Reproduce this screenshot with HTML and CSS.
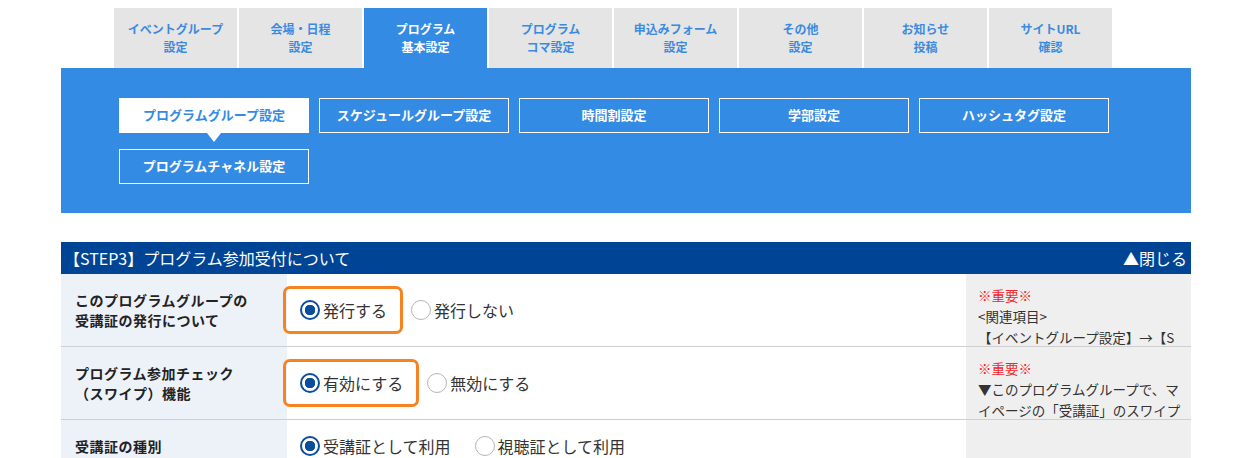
FILE: index.html
```html
<!DOCTYPE html>
<html>
<head>
    <link rel="stylesheet" href="styles.css">
</head>
<body>

<div class="page">
    <!-- Main tabs -->
    <ul class="tabs">
        <li><a href="#">イベントグループ<br>設定</a></li>
        <li><a href="#">会場・日程<br>設定</a></li>
        <li class="active"><a href="#">プログラム<br>基本設定</a></li>
        <li><a href="#">プログラム<br>コマ設定</a></li>
        <li><a href="#">申込みフォーム<br>設定</a></li>
        <li><a href="#">その他<br>設定</a></li>
        <li><a href="#">お知らせ<br>投稿</a></li>
        <li><a href="#">サイトURL<br>確認</a></li>
    </ul>

    <!-- Sub navigation -->
    <div class="subnav">
        <div class="subnav-grid">
            <a href="#" class="current">プログラムグループ設定</a>
            <a href="#">スケジュールグループ設定</a>
            <a href="#">時間割設定</a>
            <a href="#">学部設定</a>
            <a href="#">ハッシュタグ設定</a>
            <a href="#">プログラムチャネル設定</a>
        </div>
    </div>

    <!-- STEP3 section -->
    <div class="section">
        <div class="section-head">
            <span>【STEP3】プログラム参加受付について</span>
            <a href="#" class="toggle">▲閉じる</a>
        </div>

        <div class="row">
            <div class="label">このプログラムグループの<br>受講証の発行について</div>
            <div class="field">
                <label class="radio highlight"><span class="dot checked"></span>発行する</label>
                <label class="radio"><span class="dot"></span>発行しない</label>
            </div>
            <div class="note">
                <p class="important">※重要※</p>
                <p>&lt;関連項目&gt;</p>
                <p>【イベントグループ設定】→【STEP2】マイページ設定</p>
            </div>
        </div>

        <div class="row">
            <div class="label">プログラム参加チェック<br>（スワイプ）機能</div>
            <div class="field">
                <label class="radio highlight"><span class="dot checked"></span>有効にする</label>
                <label class="radio"><span class="dot"></span>無効にする</label>
            </div>
            <div class="note">
                <p class="important">※重要※</p>
                <p>▼このプログラムグループで、マイページの「受講証」のスワイプ機能を利用するかどうかを設定します。</p>
            </div>
        </div>

        <div class="row">
            <div class="label">受講証の種別</div>
            <div class="field">
                <label class="radio"><span class="dot checked"></span>受講証として利用</label>
                <label class="radio"><span class="dot"></span>視聴証として利用</label>
            </div>
            <div class="note"></div>
        </div>
    </div>
</div>

</body>
</html>
```

FILE: styles.css
```css
/* General Styling */
html, body {
    margin: 0;
    padding: 0;
    overflow: hidden;
}

body {
    font-family: "Noto Sans CJK JP", "Noto Sans", sans-serif;
    background-color: #fff;
    color: #222;
}

a {
    text-decoration: none;
}

p {
    margin: 0;
}

.page {
    width: 1130px;
    margin: 0 auto;
    padding-top: 8px;
}

/* Main tabs */
.tabs {
    list-style: none;
    margin: 0;
    padding: 0 0 0 53px;
    display: flex;
    gap: 2px;
}

.tabs li {
    width: 123px;
    height: 60px;
    background-color: #e5e5e5;
}

.tabs li a {
    height: 100%;
    display: flex;
    align-items: center;
    justify-content: center;
    text-align: center;
    font-size: 12px;
    font-weight: bold;
    line-height: 18px;
    color: #3a8be0;
}

.tabs li.active {
    background-color: #348be4;
}

.tabs li.active a {
    color: #fff;
}

/* Sub navigation */
.subnav {
    background-color: #348be4;
    padding: 30px 58px 29px;
}

.subnav-grid {
    display: grid;
    grid-template-columns: repeat(5, 190px);
    column-gap: 10px;
    row-gap: 16px;
}

.subnav-grid a {
    position: relative;
    height: 35px;
    box-sizing: border-box;
    border: 1px solid #fff;
    padding-bottom: 2px;
    display: flex;
    align-items: center;
    justify-content: center;
    font-size: 13px;
    font-weight: bold;
    color: #fff;
}

.subnav-grid a.current {
    background-color: #fff;
    color: #348be4;
}

.subnav-grid a.current::after {
    content: "";
    position: absolute;
    left: 50%;
    bottom: -10px;
    margin-left: -7px;
    border-top: 9px solid #fff;
    border-left: 7px solid transparent;
    border-right: 7px solid transparent;
}

/* Section */
.section {
    margin-top: 29px;
}

.section-head {
    background-color: #004595;
    color: #fff;
    height: 32px;
    display: flex;
    align-items: center;
    justify-content: space-between;
    padding: 0 4px 0 3px;
    font-size: 16px;
}

.section-head .toggle {
    color: #fff;
    font-size: 16px;
}

.row {
    display: grid;
    grid-template-columns: 226px 1fr 225px;
    border-bottom: 1px solid #cfcfcf;
}

.label {
    background-color: #edf1f8;
    padding: 16px 14px;
    font-size: 14px;
    font-weight: bold;
    letter-spacing: 0.5px;
    line-height: 20px;
    color: #222;
}

.field {
    display: flex;
    align-items: center;
    padding-left: 13px;
}

.radio {
    position: relative;
    display: inline-flex;
    align-items: center;
    margin-right: 24px;
    font-size: 16px;
    color: #333;
    line-height: 22px;
}

.radio.highlight::after {
    content: "";
    position: absolute;
    left: -17px;
    right: -16px;
    top: -13px;
    bottom: -13px;
    border: 3px solid #f6831f;
    border-radius: 7px;
}

.dot {
    width: 20px;
    height: 20px;
    box-sizing: border-box;
    border: 1px solid #b5b5b5;
    border-radius: 50%;
    margin-right: 3px;
    background: #fff;
}

.dot.checked {
    border: 2px solid #0b4c9c;
    background: radial-gradient(circle, #0b4c9c 0 5px, #fff 5.5px);
}

.note {
    background-color: #efefef;
    contain: size;
    overflow: hidden;
    padding: 11px 9px 0 12px;
    font-size: 13.5px;
    line-height: 21px;
    word-break: break-all;
    color: #333;
}

.note .important {
    color: #f3262b;
}
```
